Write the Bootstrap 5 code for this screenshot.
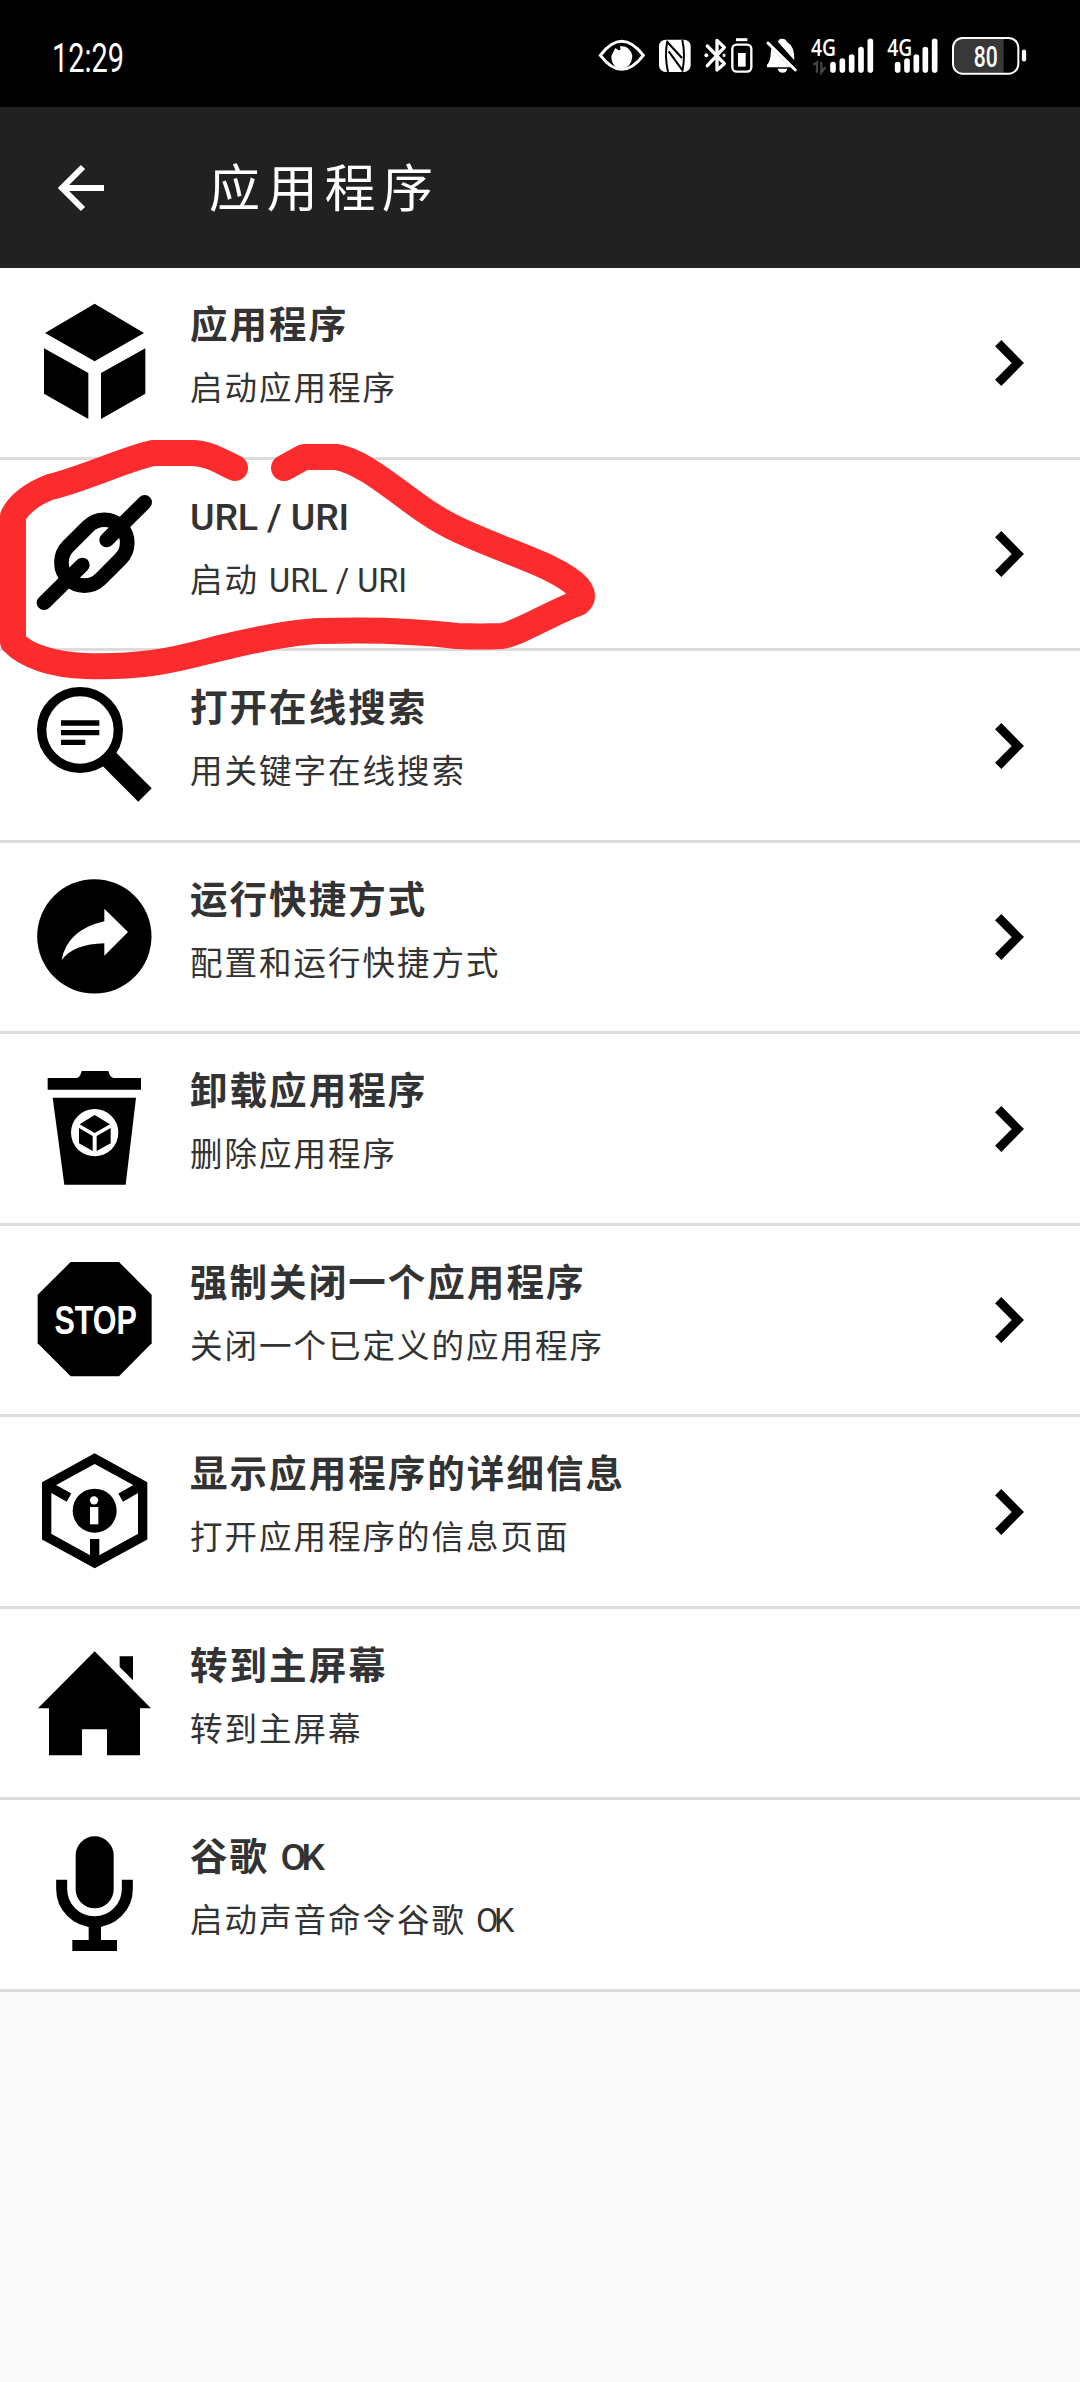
<!DOCTYPE html>
<html lang="zh-CN">
<head>
<meta charset="utf-8">
<meta name="viewport" content="width=device-width, initial-scale=1">
<title>应用程序</title>
<link href="https://cdn.jsdelivr.net/npm/bootstrap@5.3.0/dist/css/bootstrap.min.css" rel="stylesheet">
<style>
body{background:#fafafa;font-family:Roboto,"Noto Sans CJK SC",sans-serif;color:#333;min-height:2382px;overflow-x:hidden}
.status-strip{height:107px;background:#000}
.clock-text,.status-icons{display:block}
.app-header{height:161px;background:#212121;padding-left:58px}
.app-title{font-size:51px;letter-spacing:6.7px;line-height:1;margin-left:104px;padding-top:3px;color:#fff}
.list-group-flush > .list-group-item.action-row{height:191.5px;border-width:0 0 3px;border-color:#dcdcdc;border-radius:0;background:#fff;padding:0 55px 0 30px;color:#333}
.row-icon{width:130px;height:130px;flex:none}
.row-text{margin-left:30px;padding-top:25px;align-self:flex-start}
.row-title{font-size:37.5px;line-height:64px;font-weight:700;letter-spacing:2.05px}
.row-sub{font-size:32.5px;line-height:64px;letter-spacing:2px}
.latin-t{font-weight:500;letter-spacing:-.15px}
.latin-s{letter-spacing:0}
.ok-t{letter-spacing:-5px;font-weight:500}
.ok-s{letter-spacing:-4.5px}
.row-chev{width:30px;height:49px;flex:none}
.pen-mark{left:0;top:430px;pointer-events:none}
</style>
</head>
<body>
<main class="position-relative">
<div class="status-strip d-flex align-items-start justify-content-between">
  <svg class="clock-text" width="180" height="107"><text x="52" y="72" font-family="Roboto" font-size="40" fill="#fff" textLength="72" lengthAdjust="spacingAndGlyphs">12:29</text></svg>
  <svg class="status-icons" width="500" height="107" viewBox="0 -60 1500 321" fill="none" stroke="#fff">
    <path d="M61 106Q125 22 190 106Q125 190 61 106Z" stroke-width="9"/>
    <path d="M106 84Q126 100 120 79Q150 76 157 108Q155 143 125 146Q94 143 94 108Z" fill="#fff" stroke="none"/>
    <rect x="237" y="59" width="95" height="97" rx="20" fill="#fff" stroke="none"/>
    <path d="M262 62Q253 108 264 156M307 60Q317 105 307 155M262 66L306 114M266 94L306 149" stroke="#000" stroke-width="6"/>
    <path d="M382 78L433 131L411 150V61L433 82L382 137" stroke-width="10" stroke-linejoin="round" stroke-linecap="round"/>
    <circle cx="379" cy="106" r="6" fill="#fff" stroke="none"/><path d="M428 106h8" stroke-width="9"/>
    <rect x="457" y="74" width="57" height="81" rx="13" stroke-width="7"/><path d="M468 59h34" stroke-width="9"/><path d="M474 99h23v41h-23z" fill="#fff" stroke="none"/>
    <path d="M561 142V134Q572 122 572 101L574 84L632 142ZM594 66Q596 55 607 56Q617 56 621 66Q644 78 643 121ZM593 146h29Q620 158 608 158Q596 158 593 146" fill="#fff" stroke="none"/>
    <path d="M564 69L646 150" stroke-width="9" stroke-linecap="round"/>
    <g fill="#fff" stroke="none" font-family="Open Sans" font-weight="600" font-size="69"><text x="693" y="107" textLength="75" lengthAdjust="spacingAndGlyphs">4G</text><text x="922" y="107" textLength="75" lengthAdjust="spacingAndGlyphs">4G</text></g>
    <path d="M700 134L711 127V158M724 126V157L736 142" stroke="#444" stroke-width="7"/>
    <path d="M759 134V150M787 123V150M815 111V150M843 89V150M871 64V150M953 134V150M981 123V150M1009 111V150M1036 89V150M1064 64V150" stroke-width="17" stroke-linecap="round"/>
    <path d="M1145 57H1271V158H1145Q1122 156 1122 133V82Q1122 59 1145 57Z" fill="#383838" stroke="none"/>
    <rect x="1119" y="54" width="196" height="107" rx="29" stroke-width="6"/><path d="M1332 95V118" stroke-width="13" stroke-linecap="round"/>
    <text x="1181" y="141" fill="#fff" stroke="none" font-family="Roboto" font-weight="500" font-size="91" textLength="72" lengthAdjust="spacingAndGlyphs">80</text>
  </svg>
</div>
<header class="app-header d-flex align-items-center">
  <svg width="47" height="48" viewBox="0 0 47 48" fill="none" stroke="#fff" stroke-width="6"><path d="M46 24H5M25 3L4 24L25 45"/></svg>
  <h1 class="app-title mb-0 fw-normal">应用程序</h1>
</header>
<div class="list-group list-group-flush">
  <a class="list-group-item action-row d-flex align-items-center">
    <svg class="row-icon" viewBox="0 0 390 390"><path d="M194 20L342 108L194 193L45 108ZM42 154L175 228V366L42 290ZM346 154L213 228V366L346 290Z"/></svg>
    <div class="row-text"><div class="row-title">应用程序</div><div class="row-sub">启动应用程序</div></div>
    <svg class="row-chev ms-auto" viewBox="0 0 30 49"><path d="M3.200 5.200L22.800 25L3.200 44.800" fill="none" stroke="#000" stroke-width="8.800"/></svg>
  </a>
  <a class="list-group-item action-row d-flex align-items-center">
    <svg class="row-icon" viewBox="0 0 390 390" fill="none" stroke="#000" stroke-width="44" stroke-linecap="round"><rect x="82" y="122" width="222" height="138" rx="69" transform="rotate(-45 193 191)"/><path d="M344 40L230 153M42 341L157 228"/></svg>
    <div class="row-text"><div class="row-title"><span class="latin-t">URL / URI</span></div><div class="row-sub">启动 <span class="latin-s">URL / URI</span></div></div>
    <svg class="row-chev ms-auto" viewBox="0 0 30 49"><path d="M3.200 5.200L22.800 25L3.200 44.800" fill="none" stroke="#000" stroke-width="8.800"/></svg>
  </a>
  <a class="list-group-item action-row d-flex align-items-center">
    <svg class="row-icon" viewBox="0 0 390 390" fill="none" stroke="#000"><circle cx="150" cy="150" r="115" stroke-width="28"/><path d="M235 235L345 345" stroke-width="57"/><path d="M93 129H208M93 158H208M93 187H166" stroke-width="16"/></svg>
    <div class="row-text"><div class="row-title">打开在线搜索</div><div class="row-sub">用关键字在线搜索</div></div>
    <svg class="row-chev ms-auto" viewBox="0 0 30 49"><path d="M3.200 5.200L22.800 25L3.200 44.800" fill="none" stroke="#000" stroke-width="8.800"/></svg>
  </a>
  <a class="list-group-item action-row d-flex align-items-center">
    <svg class="row-icon" viewBox="0 0 390 390"><circle cx="193" cy="193" r="171.500"/><path d="M95 264Q111 174 223 148V110L294 180L223 251V214Q131 216 95 264Z" fill="#fff"/></svg>
    <div class="row-text"><div class="row-title">运行快捷方式</div><div class="row-sub">配置和运行快捷方式</div></div>
    <svg class="row-chev ms-auto" viewBox="0 0 30 49"><path d="M3.200 5.200L22.800 25L3.200 44.800" fill="none" stroke="#000" stroke-width="8.800"/></svg>
  </a>
  <a class="list-group-item action-row d-flex align-items-center">
    <svg class="row-icon" viewBox="0 0 390 390"><path d="M53 45H140Q151 42 155 24H235Q239 42 251 45H333V80H53ZM68 104H318L287 365H103Z"/><circle cx="194" cy="209" r="71" fill="#fff"/><path d="M194 156L240 184L194 210L149 184ZM147 195L188 219V264L147 241ZM242 195L200 219V264L242 241Z"/></svg>
    <div class="row-text"><div class="row-title">卸载应用程序</div><div class="row-sub">删除应用程序</div></div>
    <svg class="row-chev ms-auto" viewBox="0 0 30 49"><path d="M3.200 5.200L22.800 25L3.200 44.800" fill="none" stroke="#000" stroke-width="8.800"/></svg>
  </a>
  <a class="list-group-item action-row d-flex align-items-center">
    <svg class="row-icon" viewBox="0 0 390 390"><path d="M122 21H267L365 119V265L267 364H122L23 265V119Z"/><text transform="translate(197 238) scale(.75 1)" text-anchor="middle" font-family="Liberation Sans" font-weight="700" font-size="122" fill="#fff">STOP</text></svg>
    <div class="row-text"><div class="row-title">强制关闭一个应用程序</div><div class="row-sub">关闭一个已定义的应用程序</div></div>
    <svg class="row-chev ms-auto" viewBox="0 0 30 49"><path d="M3.200 5.200L22.800 25L3.200 44.800" fill="none" stroke="#000" stroke-width="8.800"/></svg>
  </a>
  <a class="list-group-item action-row d-flex align-items-center">
    <svg class="row-icon" viewBox="0 0 390 390"><path d="M194 38L338 117V272L194 351L50 272V117ZM50 117L117 155M338 117L272 155M194 351V279" fill="none" stroke="#000" stroke-width="28"/><circle cx="194" cy="194" r="66"/><circle cx="192" cy="163" r="12.500" fill="#fff"/><path d="M180 183H205V235H180Z" fill="#fff"/></svg>
    <div class="row-text"><div class="row-title">显示应用程序的详细信息</div><div class="row-sub">打开应用程序的信息页面</div></div>
    <svg class="row-chev ms-auto" viewBox="0 0 30 49"><path d="M3.200 5.200L22.800 25L3.200 44.800" fill="none" stroke="#000" stroke-width="8.800"/></svg>
  </a>
  <a class="list-group-item action-row d-flex align-items-center">
    <svg class="row-icon" viewBox="0 0 390 390"><path d="M194 40L363 211H330V352H231V274H156V352H57V211H24ZM269 55H309V127L269 87Z"/></svg>
    <div class="row-text"><div class="row-title">转到主屏幕</div><div class="row-sub">转到主屏幕</div></div>
  </a>
  <a class="list-group-item action-row d-flex align-items-center">
    <svg class="row-icon" viewBox="0 0 390 390"><rect x="137" y="22" width="114" height="216" rx="57"/><path d="M95 152V180A98.500 98.500 0 0 0 292 180V152" fill="none" stroke="#000" stroke-width="33"/><path d="M176 280H213V333H261V366H127V333H176Z"/></svg>
    <div class="row-text"><div class="row-title">谷歌 <span class="ok-t">OK</span></div><div class="row-sub">启动声音命令谷歌 <span class="ok-s">OK</span></div></div>
  </a>
</div>
<svg class="pen-mark position-absolute" width="620" height="260" viewBox="0 430 620 260"><path d="M235 468C220 461 208 453 192 453H153C125 459 84 479 50 487Q22 498 13 516V642C26 656 53 665 86 666C159 668 189 655 233 645C272 636 295 632 320 631C382 629 425 632 457 636Q480 637 502 636C520 633 553 612 578 603Q586 597 578 587C555 562 480 546 433 516C405 499 365 461 336 457H304L284 468" fill="none" stroke="#fc2b2e" stroke-width="26" stroke-linecap="round" stroke-linejoin="round"/></svg>
</main>
<script src="https://cdn.jsdelivr.net/npm/bootstrap@5.3.0/dist/js/bootstrap.bundle.min.js"></script>
</body>
</html>
